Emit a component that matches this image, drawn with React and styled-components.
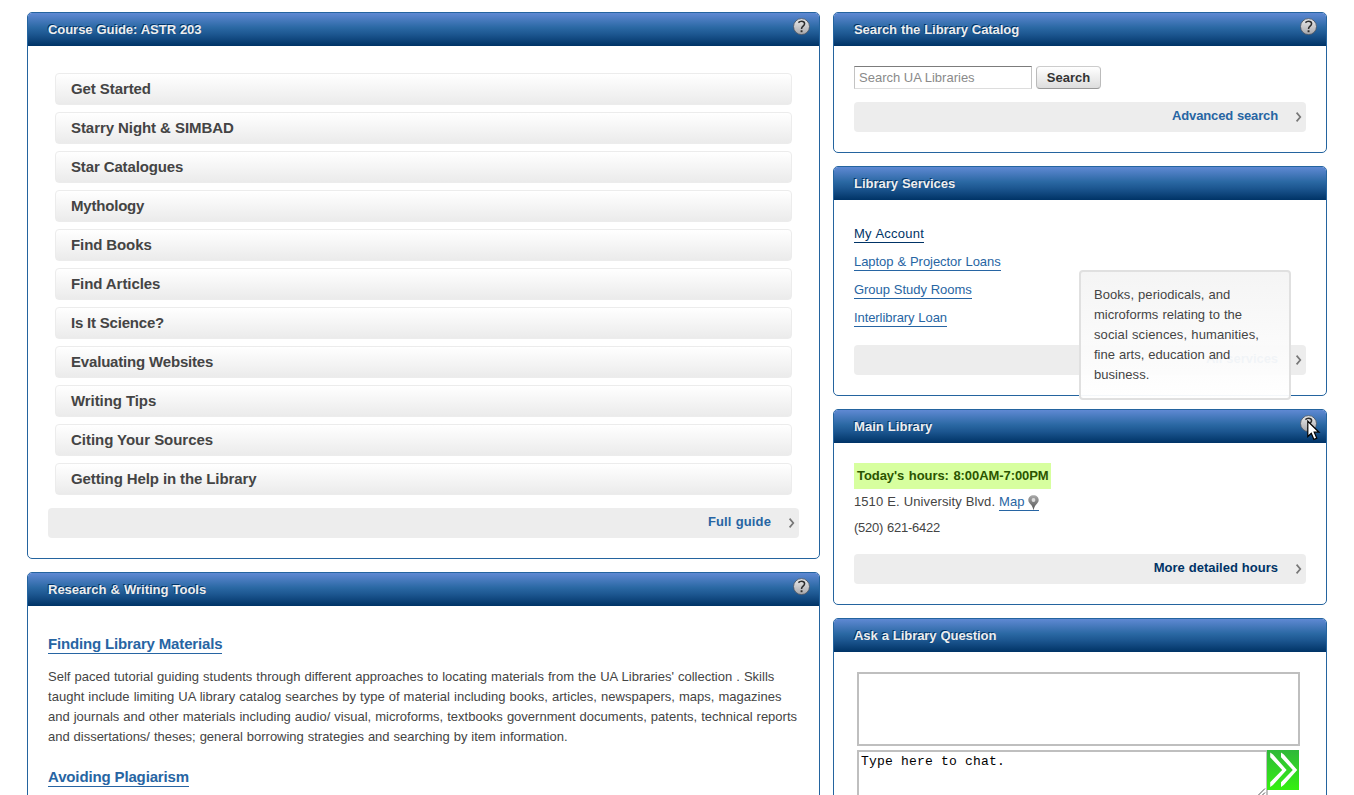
import React from "react";
import styled, { createGlobalStyle } from "styled-components";

const GlobalStyle = createGlobalStyle`
  *, *::before, *::after { box-sizing: border-box; }
  html, body { height: 795px; overflow: hidden; }
  body {
    margin: 0;
    background: #fff;
    color: #444;
    font: 13px/20px "Liberation Sans", Arial, sans-serif;
    word-spacing: 0.39px;
  }
  h2, h3, p, ul { margin: 0; padding: 0; font-size: inherit; }
`;

const Page = styled.main`
  display: grid;
  grid-template-columns: 793px 494px;
  column-gap: 13px;
  padding: 12px 27px 0;
  width: 1354px;
  height: 795px;
  overflow: hidden;
`;

const Column = styled.div`
  display: flex;
  flex-direction: column;
  gap: 13px;
`;

const PanelBox = styled.section`
  position: relative;
  flex: none;
  height: ${(p) => p.$height}px;
  border: 1px solid #24649f;
  border-radius: 5px;
  background: #fff;
`;

const PanelHeader = styled.header`
  display: flex;
  justify-content: space-between;
  height: 33px;
  padding: 5px 9px 0 20px;
  border-radius: 4px 4px 0 0;
  background: linear-gradient(#5f89d3 0%, #2a68a3 45%, #1c5690 65%, #003366 100%);
`;

const Title = styled.h2`
  color: #eee;
  line-height: 24px;
  letter-spacing: ${(p) => p.$track || 0}px;
  text-shadow: -1px -1px 0 #003366;
  white-space: nowrap;
`;

const Body = styled.div`
  display: flex;
  flex-direction: column;
  padding: ${(p) => p.$top ?? 20}px 20px 20px;
`;

const Text = styled.span`
  letter-spacing: ${(p) => p.$track || 0}px;
  white-space: nowrap;
`;

const GuideList = styled.ul`
  display: flex;
  flex-direction: column;
  gap: 7px;
  margin: 0 7px 13px;
  list-style: none;
`;

const GuideItem = styled.li`
  height: 32px;
  padding: 0 15px;
  border: 1px solid #ececec;
  border-radius: 4px;
  background: linear-gradient(#fff, #ebebeb);
  font-size: 15px;
  font-weight: bold;
  line-height: 29px;
  word-spacing: 0;
  letter-spacing: ${(p) => p.$track || 0}px;
`;

const MoreBar = styled.div`
  display: flex;
  justify-content: flex-end;
  gap: 17px;
  flex: none;
  height: 30px;
  padding: 0 4px 0 0;
  border-radius: 4px;
  background: #ededed;
  color: ${(p) => (p.$active ? "#003366" : "#2765a3")};
  font-weight: bold;
  line-height: 27px;
  svg { margin-top: 10px; }
`;

const SearchRow = styled.form`
  display: flex;
  gap: 4px;
  margin-bottom: 13px;
`;

const SearchInput = styled.input`
  width: 178px;
  height: 23px;
  padding: 0 4px;
  border: 1px solid #ddd;
  border-top-color: #7c7c7c;
  border-left-color: #c3c3c3;
  border-right-color: #c3c3c3;
  background: #fff;
  font: 13px "Liberation Sans", Arial, sans-serif;
  &::placeholder { color: #8a8a8a; }
`;

const SearchButton = styled.button`
  width: 65px;
  height: 23px;
  padding: 0;
  border: 1px solid #bbb;
  border-top-color: #ccc;
  border-bottom-color: #999;
  border-radius: 4px;
  background: linear-gradient(#fff, #ddd);
  color: #333;
  font: bold 13px "Liberation Sans", Arial, sans-serif;
`;

const ServiceList = styled.ul`
  display: flex;
  flex-direction: column;
  align-items: flex-start;
  gap: 11px;
  margin-bottom: 18px;
  list-style: none;
`;

const Link = styled.a`
  display: block;
  height: 17px;
  border-bottom: 1px solid currentColor;
  color: ${(p) => (p.$active ? "#003366" : "#2765a3")};
  line-height: 15px;
  letter-spacing: ${(p) => p.$track || 0}px;
  white-space: nowrap;
`;

const Tooltip = styled.div`
  position: absolute;
  z-index: 2;
  top: 103px;
  left: 245px;
  display: flex;
  flex-direction: column;
  width: 212px;
  height: 130px;
  padding: 13px;
  border: 2px solid #e0e0e0;
  border-radius: 4px;
  background: linear-gradient(rgba(244, 244, 244, 0.95), rgba(255, 255, 255, 0.95));
`;

const Hours = styled.strong`
  align-self: flex-start;
  width: 197px;
  height: 26px;
  padding: 0 3px;
  background: #d7ff9f;
  color: #2b5500;
  line-height: 26px;
  letter-spacing: -0.07px;
  word-spacing: 1.1px;
  white-space: nowrap;
`;

const AddressRow = styled.div`
  display: flex;
  gap: 4px;
  height: 26px;
  line-height: 26px;
`;

const MapLink = styled.a`
  display: flex;
  gap: 4px;
  height: 22px;
  border-bottom: 1px solid #2765a3;
  color: #2765a3;
  svg { margin-top: 6px; }
`;

const Phone = styled.div`
  height: 26px;
  margin-bottom: 13px;
  line-height: 26px;
`;

const Chat = styled.div`
  display: flex;
  flex-direction: column;
  gap: 4px;
  margin: 0 -1px 0 3px;
`;

const ChatLog = styled.div`
  width: 443px;
  height: 74px;
  border: 2px solid #bfbfbf;
`;

const ChatEntry = styled.div`
  display: flex;
`;

const ChatInput = styled.div`
  display: flex;
  flex: none;
  justify-content: space-between;
  align-items: flex-end;
  width: 411px;
  height: 50px;
  border: 2px solid #bfbfbf;
  padding-left: 2px;
  color: #000;
  font: 13px/20px "Liberation Mono", monospace;
  word-spacing: 0;
`;

const ChatText = styled.span`
  align-self: flex-start;
  letter-spacing: 0.2px;
`;

const Send = styled.div`
  z-index: 1;
  width: 32px;
  height: 40px;
  margin-left: -1px;
  background: linear-gradient(#2fb83a, #34f010);
`;

const ToolTitle = styled.h3`
  align-self: flex-start;
  height: 20px;
  border-bottom: 1px solid #2765a3;
  color: #2765a3;
  font-size: 15px;
  line-height: 20px;
  word-spacing: 0;
  letter-spacing: ${(p) => p.$track || 0}px;
`;

const Summary = styled.p`
  display: flex;
  flex-direction: column;
  align-items: flex-start;
  margin: 13px 0 20px;
`;

const CursorMark = styled.svg`
  position: absolute;
  z-index: 3;
  top: 10px;
  left: 473px;
`;

function HelpIcon() {
  return (
    <svg width="17" height="18" viewBox="0 0 17 18">
      <defs>
        <linearGradient id="helpFill" x1="0" y1="0" x2="0" y2="1">
          <stop offset="0" stopColor="#ececec" />
          <stop offset="1" stopColor="#a6a6aa" />
        </linearGradient>
      </defs>
      <circle cx="8.5" cy="8.6" r="8" fill="url(#helpFill)" stroke="#4d5868" strokeWidth="0.9" />
      <path d="M5.400 4.600C6.300 3.700 7.400 3.300 8.500 3.300c1.900 0 3.100 1 3.100 2.500 0 2.200-3 2.500-3 4.700v.6" fill="none" stroke="#2c2c2c" strokeWidth="1.500" />
      <rect x="7.600" y="12.300" width="1.900" height="1.900" fill="#2c2c2c" />
    </svg>
  );
}

function Chevron() {
  return (
    <svg width="7" height="10" viewBox="0 0 7 10">
      <path d="M1.600 .6 5.300 5 1.600 9.400" fill="none" stroke="#777" strokeWidth="1.700" />
    </svg>
  );
}

function MapPin() {
  return (
    <svg width="11" height="15" viewBox="0 0 11 15">
      <defs>
        <linearGradient id="pinFill" x1="0" y1="0" x2="0" y2="1">
          <stop offset="0" stopColor="#aaa" />
          <stop offset="1" stopColor="#555" />
        </linearGradient>
      </defs>
      <path d="M5.500.2C2.300.2.300 2.300.3 5c0 2.100 1.400 3.200 2.700 4.800C4.100 11.200 4.900 12.800 5.300 14.800h.4C6.100 12.800 6.900 11.200 8 9.800 9.300 8.200 10.700 7.100 10.700 5c0-2.700-2-4.800-5.200-4.800z" fill="url(#pinFill)" />
      <circle cx="5.500" cy="5" r="1.900" fill="#ddd" />
    </svg>
  );
}

function Arrows() {
  return (
    <svg width="32" height="40" viewBox="0 0 32 40">
      <path d="M3.200 2.500 6 4.500 19.600 20 6 35 3.200 37V32.200L15.200 20 3.200 7.300zM14 2.500 16.800 4.500 30.200 20 16.800 35 14 37V32.200L25.800 20 14 7.300z" fill="#fff" />
    </svg>
  );
}

function Panel({ title, track, height, help, top, children, overlay }) {
  return (
    <PanelBox $height={height}>
      <PanelHeader>
        <Title $track={track}>{title}</Title>
        {help && <HelpIcon />}
      </PanelHeader>
      <Body $top={top}>{children}</Body>
      {overlay}
    </PanelBox>
  );
}

function More({ children, active, track }) {
  return (
    <MoreBar $active={active}>
      <Text $track={track}>{children}</Text>
      <Chevron />
    </MoreBar>
  );
}

const guideTopics = [
  ["Get Started", -0.09],
  ["Starry Night & SIMBAD", -0.07],
  ["Star Catalogues", -0.13],
  ["Mythology", -0.2],
  ["Find Books", -0.1],
  ["Find Articles", -0.08],
  ["Is It Science?", -0.2],
  ["Evaluating Websites", -0.18],
  ["Writing Tips", -0.08],
  ["Citing Your Sources", -0.04],
  ["Getting Help in the Library", -0.11],
];

const summaryLines = [
  ["Self paced tutorial guiding students through different approaches to locating materials from the UA Libraries' collection . Skills", 0.01],
  ["taught include limiting UA library catalog searches by type of material including books, articles, newspapers, maps, magazines", 0.02],
  ["and journals and other materials including audio/ visual, microforms, textbooks government documents, patents, technical reports", 0.006],
  ["and dissertations/ theses; general borrowing strategies and searching by item information.", -0.02],
];

const tooltipLines = [
  ["Books, periodicals, and", 0.05],
  ["microforms relating to the", 0.01],
  ["social sciences, humanities,", 0.11],
  ["fine arts, education and", 0],
  ["business.", 0.05],
];

export default function App() {
  return (
    <>
      <GlobalStyle />
      <Page>
        <Column>
          <Panel title="Course Guide: ASTR 203" track={-0.05} height={547} help top={27}>
            <GuideList>
              {guideTopics.map(([label, track]) => (
                <GuideItem key={label} $track={track}>{label}</GuideItem>
              ))}
            </GuideList>
            <More track={0.13}>Full guide</More>
          </Panel>
          <Panel title="Research & Writing Tools" height={300} help top={28}>
            <ToolTitle $track={-0.16}>Finding Library Materials</ToolTitle>
            <Summary>
              {summaryLines.map(([line, track]) => (
                <Text key={line} $track={track}>{line}</Text>
              ))}
            </Summary>
            <ToolTitle $track={-0.14}>Avoiding Plagiarism</ToolTitle>
          </Panel>
        </Column>
        <Column>
          <Panel title="Search the Library Catalog" track={-0.06} height={141} help>
            <SearchRow>
              <SearchInput placeholder="Search UA Libraries" />
              <SearchButton type="button">Search</SearchButton>
            </SearchRow>
            <More track={-0.14}>Advanced search</More>
          </Panel>
          <Panel
            title="Library Services"
            track={-0.02}
            height={230}
            top={26}
            overlay={
              <Tooltip>
                {tooltipLines.map(([line, track]) => (
                  <Text key={line} $track={track}>{line}</Text>
                ))}
              </Tooltip>
            }
          >
            <ServiceList>
              <li><Link $active $track={0.26}>My Account</Link></li>
              <li><Link $track={-0.05}>Laptop & Projector Loans</Link></li>
              <li><Link $track={-0.05}>Group Study Rooms</Link></li>
              <li><Link $track={-0.08}>Interlibrary Loan</Link></li>
            </ServiceList>
            <More track={-0.05}>All services</More>
          </Panel>
          <Panel
            title="Main Library"
            track={0.05}
            height={196}
            help
            overlay={
              <CursorMark width="14" height="21" viewBox="0 0 14 21">
                <path d="M.8 1.200v15.300l3.500-3.300 2.600 6.200 2.900-1.200-2.600-6h4.800z" fill="#fff" stroke="#000" strokeWidth="1.200" />
              </CursorMark>
            }
          >
            <Hours>Today's hours: 8:00AM-7:00PM</Hours>
            <AddressRow>
              <Text $track={0.08}>1510 E. University Blvd.</Text>
              <MapLink><Text>Map</Text><MapPin /></MapLink>
            </AddressRow>
            <Phone><Text $track={-0.24}>(520) 621-6422</Text></Phone>
            <More active>More detailed hours</More>
          </Panel>
          <Panel title="Ask a Library Question" track={-0.05} height={230}>
            <Chat>
              <ChatLog />
              <ChatEntry>
                <ChatInput>
                  <ChatText>Type here to chat.</ChatText>
                  <svg width="8" height="10" viewBox="0 0 8 10">
                    <path d="M0 7.500 7 .5M4 7.500 7 4.500" stroke="#555" strokeWidth="1" />
                  </svg>
                </ChatInput>
                <Send><Arrows /></Send>
              </ChatEntry>
            </Chat>
          </Panel>
        </Column>
      </Page>
    </>
  );
}
